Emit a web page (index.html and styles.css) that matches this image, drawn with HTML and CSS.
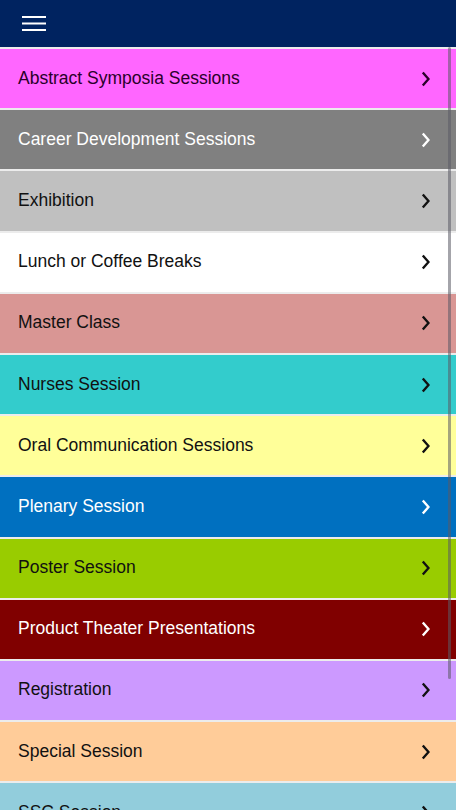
FILE: index.html
```html
<!DOCTYPE html>
<html lang="en">
<head>
  <meta charset="UTF-8" />
  <meta name="viewport" content="width=device-width, initial-scale=1" />
  <title>Session Types</title>
  <link rel="stylesheet" href="styles.css">
</head>
<body>
  <header class="top-bar">
    <button class="menu-btn" aria-label="Menu">
      <svg width="24" height="16" viewBox="0 0 24 16">
        <path d="M0 1h24M0 7.5h24M0 14h24" stroke="#fff" stroke-width="2" fill="none" />
      </svg>
    </button>
  </header>

  <div class="list-wrap">
    <ul class="session-list">
      <li class="session magenta">Abstract Symposia Sessions</li>
      <li class="session grey dark">Career Development Sessions</li>
      <li class="session silver">Exhibition</li>
      <li class="session white">Lunch or Coffee Breaks</li>
      <li class="session rose">Master Class</li>
      <li class="session teal">Nurses Session</li>
      <li class="session yellow">Oral Communication Sessions</li>
      <li class="session blue dark">Plenary Session</li>
      <li class="session lime">Poster Session</li>
      <li class="session maroon dark">Product Theater Presentations</li>
      <li class="session lilac">Registration</li>
      <li class="session peach">Special Session</li>
      <li class="session sky">SSC Session</li>
    </ul>
    <div class="scroll-thumb"></div>
  </div>

  <script>
    // add the chevron to every row
    document.querySelectorAll('.session').forEach(item => {
      const label = item.textContent;
      item.innerHTML = `
        <span class="label">${label}</span>
        <svg class="chevron" width="9" height="16" viewBox="0 0 9 16">
          <path d="M1.8 1.5 7.5 8l-5.7 6.5" stroke="currentColor" stroke-width="2.4" fill="none" />
        </svg>
      `;
    });
  </script>
</body>
</html>
```

FILE: styles.css
```css
body {
  font-family: "Liberation Sans", Arial, sans-serif;
  margin: 0;
  background: #e6e6e6;
  overflow: hidden;
}

.top-bar {
  height: 47px;
  background: #002360;
  display: flex;
  align-items: center;
  padding-left: 22px;
}

.menu-btn {
  background: none;
  border: none;
  padding: 0;
  display: flex;
  cursor: pointer;
}

.list-wrap {
  position: relative;
}

.session-list {
  list-style: none;
  margin: 0;
  padding: 0;
}

.session {
  height: 59.2px;
  border-top: 2px solid #ececec;
  display: flex;
  align-items: center;
  justify-content: space-between;
  padding: 0 26px 0 18px;
  font-size: 17.5px;
  color: #111;
}

.session.dark {
  color: #fff;
}

.label {
  margin-top: -1px;
}

.chevron {
  flex-shrink: 0;
}

.magenta { background: #ff66ff; color: #2a002a; }
.grey    { background: #808080; }
.silver  { background: #c0c0c0; }
.white   { background: #ffffff; }
.rose    { background: #d99694; }
.teal    { background: #33cccc; }
.yellow  { background: #ffff99; }
.blue    { background: #0070c0; }
.lime    { background: #99cc00; }
.maroon  { background: #800000; }
.lilac   { background: #cc99ff; }
.peach   { background: #ffcc99; }
.sky     { background: #92cddc; }

.scroll-thumb {
  position: absolute;
  top: 0;
  right: 5px;
  width: 3px;
  height: 632px;
  background: rgba(90, 90, 100, 0.55);
  border-radius: 2px;
}
```
